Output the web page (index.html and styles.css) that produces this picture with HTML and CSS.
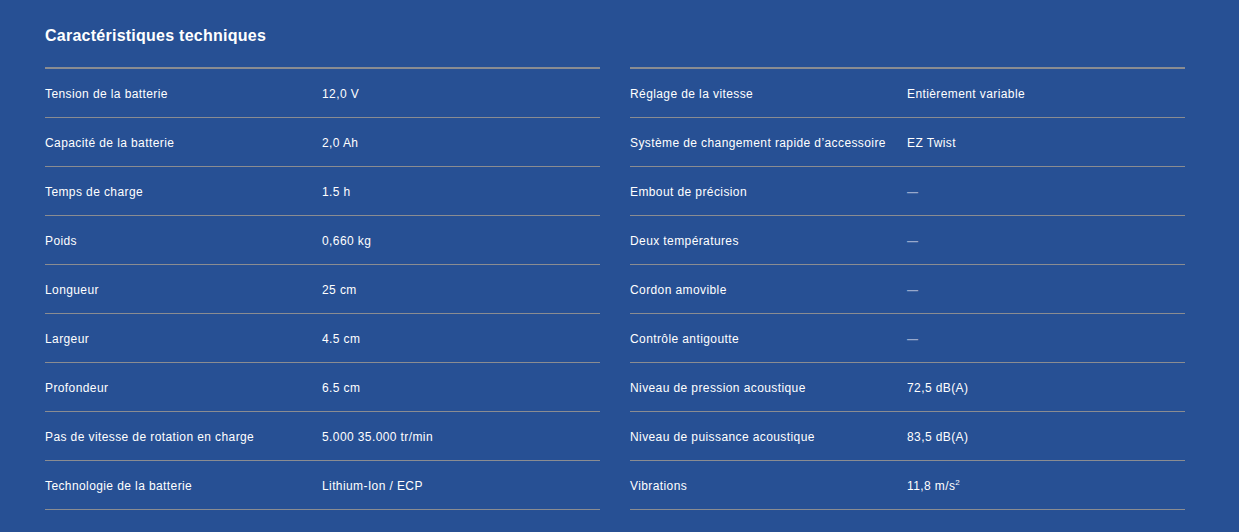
FILE: index.html
```html
<!DOCTYPE html>
<html lang="fr">
<head>
<meta charset="utf-8">
<title>Caractéristiques techniques</title>
<link rel="stylesheet" href="styles.css">
</head>
<body>
<section class="specs">
  <h2 class="specs-title">Caractéristiques techniques</h2>
  <div class="specs-grid">
    <dl class="spec-table">
      <div class="row"><dt>Tension de la batterie</dt><dd>12,0 V</dd></div>
      <div class="row"><dt>Capacité de la batterie</dt><dd>2,0 Ah</dd></div>
      <div class="row"><dt>Temps de charge</dt><dd>1.5 h</dd></div>
      <div class="row"><dt>Poids</dt><dd>0,660 kg</dd></div>
      <div class="row"><dt>Longueur</dt><dd>25 cm</dd></div>
      <div class="row"><dt>Largeur</dt><dd>4.5 cm</dd></div>
      <div class="row"><dt>Profondeur</dt><dd>6.5 cm</dd></div>
      <div class="row"><dt>Pas de vitesse de rotation en charge</dt><dd>5.000 35.000 tr/min</dd></div>
      <div class="row"><dt>Technologie de la batterie</dt><dd>Lithium-Ion / ECP</dd></div>
    </dl>
    <dl class="spec-table">
      <div class="row"><dt>Réglage de la vitesse</dt><dd>Entièrement variable</dd></div>
      <div class="row"><dt>Système de changement rapide d’accessoire</dt><dd>EZ Twist</dd></div>
      <div class="row"><dt>Embout de précision</dt><dd class="none">—</dd></div>
      <div class="row"><dt>Deux températures</dt><dd class="none">—</dd></div>
      <div class="row"><dt>Cordon amovible</dt><dd class="none">—</dd></div>
      <div class="row"><dt>Contrôle antigoutte</dt><dd class="none">—</dd></div>
      <div class="row"><dt>Niveau de pression acoustique</dt><dd>72,5 dB(A)</dd></div>
      <div class="row"><dt>Niveau de puissance acoustique</dt><dd>83,5 dB(A)</dd></div>
      <div class="row"><dt>Vibrations</dt><dd>11,8 m/s<sup>2</sup></dd></div>
    </dl>
  </div>
</section>
</body>
</html>
```

FILE: styles.css
```css
html, body {
  margin: 0;
  padding: 0;
  background: #275094;
}
body {
  font-family: "Liberation Sans", Arial, sans-serif;
  color: #ffffff;
  height: 532px;
  overflow: hidden;
}
.specs {
  padding: 26px 54px 0 45px;
}
.specs-title {
  margin: 0;
  font-size: 16px;
  font-weight: 700;
  letter-spacing: 0.25px;
  line-height: 20px;
}
.specs-grid {
  margin-top: 21px;
  display: grid;
  grid-template-columns: 555px 555px;
  column-gap: 30px;
}
.spec-table {
  margin: 0;
  border-top: 2px solid #8a8c91;
}
.row {
  display: flex;
  align-items: center;
  height: 49px;
  padding-top: 1px;
  box-sizing: border-box;
  border-bottom: 1px solid #8a8c91;
  font-size: 12px;
  letter-spacing: 0.4px;
}
.row dt {
  width: 277px;
  flex: none;
}
.row dd {
  margin: 0;
}
.row dd.none {
  color: #97a8cc;
  font-size: 11px;
  font-weight: 700;
  letter-spacing: 0;
}
.row sup {
  font-size: 8px;
  line-height: 0;
}
```
